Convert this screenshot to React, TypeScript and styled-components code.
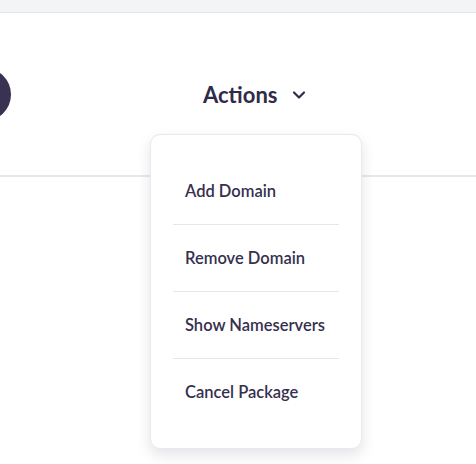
import React, { FC, useState } from 'react'
import styled, { createGlobalStyle } from 'styled-components'
import { ChevronDown } from 'lucide-react'

const actions = ['Add Domain', 'Remove Domain', 'Show Nameservers', 'Cancel Package']

const App: FC = () => {
  const [open, setOpen] = useState(true)
  return (
    <PageStyles>
      <GlobalStyle />
      <TopStrip />
      <HeaderStyles>
        <Avatar />
        <ActionsContainer>
          <ActionsButton onClick={() => setOpen(!open)}>
            Actions
            <ChevronDown size={20} strokeWidth={2.6} />
          </ActionsButton>
          {open && (
            <MenuStyles>
              {actions.map((a, index) => (
                <MenuItem key={index} $last={index === actions.length - 1}>
                  {a}
                </MenuItem>
              ))}
            </MenuStyles>
          )}
        </ActionsContainer>
      </HeaderStyles>
    </PageStyles>
  )
}

const GlobalStyle = createGlobalStyle`
  html, body {
    margin: 0;
    height: 100%;
    background: #ffffff;
    font-family: Lato, "Noto Sans", sans-serif;
  }
  #root {
    height: 100%;
  }
`

const PageStyles = styled.div`
  height: 100%;
`

const TopStrip = styled.div`
  height: 12px;
  background: #f3f4f6;
  border-bottom: 1px solid #e4e3ec;
`

const HeaderStyles = styled.div`
  display: flex;
  align-items: center;
  height: 162px;
  border-bottom: 2px solid #e7e7ed;
`

const Avatar = styled.div`
  flex: none;
  width: 53px;
  height: 53px;
  margin-left: -42px;
  border-radius: 50%;
  background: #3a3253;
`

const ActionsContainer = styled.div`
  position: relative;
  margin-left: 192px;
`

const ActionsButton = styled.button`
  display: flex;
  align-items: center;
  gap: 12px;
  height: 30px;
  padding: 0;
  border: none;
  background: none;
  font-family: Lato, "Noto Sans", sans-serif;
  font-size: 22px;
  font-weight: 700;
  color: #302b48;
  cursor: pointer;
  svg {
    margin-top: 1px;
  }
`

const MenuStyles = styled.div`
  position: absolute;
  z-index: 10;
  top: 55px;
  left: -53px;
  width: 166px;
  padding: 23px 22px;
  background: #ffffff;
  border: 1px solid #e8e8ee;
  border-radius: 10px;
  box-shadow: 0 6px 14px rgb(30 25 60 / 12%);
  display: flex;
  flex-direction: column;
`

const MenuItem = styled.div<{ $last: boolean }>`
  display: flex;
  align-items: center;
  height: 66px;
  padding-left: 12px;
  border-bottom: ${(p) => (p.$last ? 'none' : '1px solid #e5e5ea')};
  font-size: 16.5px;
  font-weight: 600;
  color: #36304f;
  white-space: nowrap;
`

export default App
